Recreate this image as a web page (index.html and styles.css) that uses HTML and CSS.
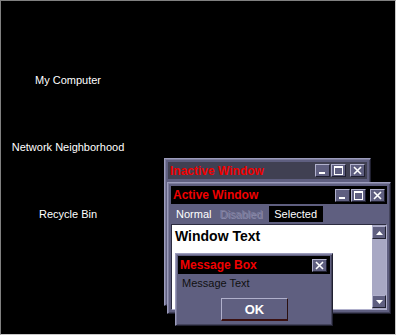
FILE: index.html
```html
<!DOCTYPE html>
<html>
<head>
<meta charset="utf-8">
<link rel="stylesheet" href="styles.css">
</head>
<body>
<div class="screen">
  <div class="icons">
    <div class="icon-label">My Computer</div>
    <div class="icon-label">Network Neighborhood</div>
    <div class="icon-label">Recycle Bin</div>
  </div>

  <div class="win win-inactive">
    <div class="titlebar inactive">
      <span class="title">Inactive Window</span>
      <div class="tbtns">
        <span class="tbtn"><svg width="9" height="9" viewBox="0 0 9 9"><rect x="1" y="6" width="6" height="2" fill="#fff"/></svg></span>
        <span class="tbtn"><svg width="9" height="9" viewBox="0 0 9 9"><rect x="0.5" y="0.5" width="8" height="8" fill="none" stroke="#fff"/><rect x="0" y="0" width="9" height="2" fill="#fff"/></svg></span>
        <span class="tbtn close"><svg width="9" height="9" viewBox="0 0 9 9"><path d="M1 1L8 8M8 1L1 8" stroke="#fff" stroke-width="1.6"/></svg></span>
      </div>
    </div>
  </div>

  <div class="win win-active">
    <div class="titlebar active">
      <span class="title">Active Window</span>
      <div class="tbtns">
        <span class="tbtn"><svg width="9" height="9" viewBox="0 0 9 9"><rect x="1" y="6" width="6" height="2" fill="#fff"/></svg></span>
        <span class="tbtn"><svg width="9" height="9" viewBox="0 0 9 9"><rect x="0.5" y="0.5" width="8" height="8" fill="none" stroke="#fff"/><rect x="0" y="0" width="9" height="2" fill="#fff"/></svg></span>
        <span class="tbtn close"><svg width="9" height="9" viewBox="0 0 9 9"><path d="M1 1L8 8M8 1L1 8" stroke="#fff" stroke-width="1.6"/></svg></span>
      </div>
    </div>
    <div class="menubar">
      <span class="menu">Normal</span>
      <span class="menu disabled">Disabled</span>
      <span class="menu selected">Selected</span>
    </div>
    <div class="client">
      <div class="client-text">Window Text</div>
      <div class="scrollbar">
        <span class="sbtn"><svg width="7" height="4" viewBox="0 0 7 4"><path d="M0 4L3.5 0L7 4Z" fill="#fff"/></svg></span>
        <span class="strack"></span>
        <span class="sbtn"><svg width="7" height="4" viewBox="0 0 7 4"><path d="M0 0L3.5 4L7 0Z" fill="#fff"/></svg></span>
      </div>
    </div>
  </div>

  <div class="win win-msg">
    <div class="titlebar active msg-title">
      <span class="title">Message Box</span>
      <div class="tbtns">
        <span class="tbtn close"><svg width="9" height="9" viewBox="0 0 9 9"><path d="M1 1L8 8M8 1L1 8" stroke="#fff" stroke-width="1.6"/></svg></span>
      </div>
    </div>
    <div class="msg-text">Message Text</div>
    <div class="msg-actions">
      <span class="ok">OK</span>
    </div>
  </div>
</div>
</body>
</html>
```

FILE: styles.css
```css
* { box-sizing: border-box; }
html, body { margin: 0; padding: 0; background: #000; }
body {
  font-family: "Liberation Sans", Arial, sans-serif;
  font-size: 11px;
}
.screen {
  position: relative;
  width: 396px;
  height: 335px;
  background: #000;
  border-top: 1px solid #808080;
  border-left: 1px solid #808080;
  border-right: 1px solid #c8c8c8;
  border-bottom: 1px solid #c8c8c8;
  overflow: hidden;
}
.icons {
  display: flex;
  flex-direction: column;
  width: 134px;
  padding-top: 73px;
  gap: 54px;
}
.icon-label {
  color: #fff;
  text-align: center;
  height: 13px;
  line-height: 13px;
  font-size: 11px;
}

.win {
  position: absolute;
  background: #5f5f80;
  border-top: 1px solid #9c9cbc;
  border-left: 1px solid #9c9cbc;
  border-right: 1px solid #202030;
  border-bottom: 1px solid #202030;
  box-shadow: inset 1px 1px 0 #7c7c9c, inset -1px -1px 0 #44445c;
  padding: 3px;
}
.win-inactive { left: 163px; top: 157px; width: 207px; height: 148px; }
.win-active { left: 166px; top: 181px; width: 224px; height: 132px; display: flex; flex-direction: column; }
.win-msg { left: 174px; top: 252px; width: 158px; height: 73px; padding: 2px; display: flex; flex-direction: column; }

.titlebar {
  display: flex;
  align-items: center;
  justify-content: space-between;
  height: 18px;
  padding: 0 2px 0 2px;
}
.titlebar.inactive { background: #404052; height: 17px; }
.titlebar.active { background: #000; }
.title {
  color: #f00000;
  font-weight: bold;
  font-size: 12px;
}
.tbtns { display: flex; gap: 1px; }
.tbtn {
  width: 15px;
  height: 13px;
  display: flex;
  align-items: center;
  justify-content: center;
  background: #5f5f80;
  border-top: 1px solid #b0b0cc;
  border-left: 1px solid #b0b0cc;
  border-right: 1px solid #202030;
  border-bottom: 1px solid #202030;
}
.tbtn.close { margin-left: 3px; }

.menubar {
  display: flex;
  align-items: center;
  height: 17px;
  margin-top: 1px;
}
.menu { color: #fff; padding: 0 4px 0 5px; line-height: 16px; height: 16px; }
.menu.disabled { color: #7c7c9c; text-shadow: 1px 1px 0 #8c8cac; padding: 0 4px; }
.menu.selected { background: #000; color: #fff; padding: 0 6px 0 5px; margin-left: 3px; }

.client {
  flex: 1;
  margin-top: 2px;
  display: flex;
  background: #fff;
  border-top: 1px solid #2c2c40;
  border-left: 1px solid #2c2c40;
  border-right: 1px solid #b0b0cc;
  border-bottom: 1px solid #b0b0cc;
}
.client-text {
  flex: 1;
  font-weight: bold;
  font-size: 14px;
  color: #000;
  padding: 3px 0 0 3px;
}
.scrollbar {
  width: 14px;
  display: flex;
  flex-direction: column;
  background: #a8a8c4;
  padding: 1px 0;
}
.sbtn {
  height: 13px;
  display: flex;
  align-items: center;
  justify-content: center;
  background: #5f5f80;
  border-top: 1px solid #b0b0cc;
  border-left: 1px solid #b0b0cc;
  border-right: 1px solid #202030;
  border-bottom: 1px solid #202030;
}
.strack { flex: 1; }

.msg-title { height: 18px; padding-right: 3px; }
.msg-text { color: #101010; padding: 2px 0 0 4px; height: 20px; line-height: 14px; }
.msg-actions { display: flex; justify-content: center; padding-top: 4px; padding-left: 1px; }
.ok {
  width: 67px;
  height: 23px;
  display: flex;
  align-items: center;
  justify-content: center;
  color: #fff;
  font-weight: bold;
  font-size: 13px;
  background: #5f5f80;
  border-top: 1px solid #b0b0cc;
  border-left: 1px solid #b0b0cc;
  border-right: 1px solid #2a1010;
  border-bottom: 2px solid #3a1010;
}
```
